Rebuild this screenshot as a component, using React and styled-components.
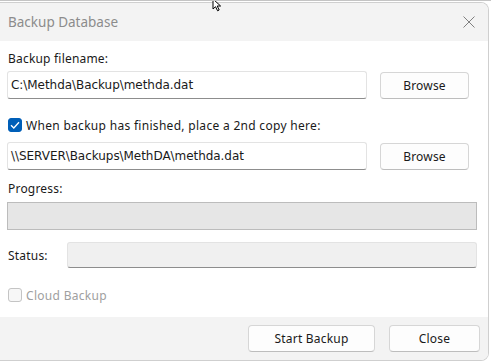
import React from "react";
import styled, { createGlobalStyle } from "styled-components";

const Global = createGlobalStyle`
  html, body {
    margin: 0;
    padding: 0;
    background: #ffffff;
    font-family: "Noto Sans", "Open Sans", sans-serif;
    font-size: 12px;
    letter-spacing: 0.2px;
    color: #1a1a1a;
  }
`;

const Screen = styled.div`
  position: relative;
  width: 491px;
  height: 364px;
  overflow: hidden;
  border-top: 1px solid #c4c4c4;
  box-sizing: border-box;
  padding-top: 1px;
`;

const Window = styled.div`
  width: 489px;
  height: 359px;
  box-sizing: border-box;
  border: 1px solid #cfcfcf;
  border-left: none;
  border-radius: 0 8px 8px 0;
  overflow: hidden;
  display: flex;
  flex-direction: column;
  background: #ffffff;
`;

const TitleBar = styled.div`
  height: 38px;
  flex: none;
  background: #f3f3f3;
  display: flex;
  align-items: center;
  justify-content: space-between;
  padding: 0 13px 0 8px;
  color: #8c8c8c;
  font-size: 13.5px;
  letter-spacing: 0;
`;

const Body = styled.div`
  flex: 1;
  padding: 10px 11px 0 7px;
  display: flex;
  flex-direction: column;
`;

const Label = styled.div`
  height: 16px;
  line-height: 16px;
  padding-left: 1px;
  margin-top: ${(p) => p.$mt || 0}px;
  color: ${(p) => (p.$disabled ? "#a0a0a0" : "#1a1a1a")};
`;

const Row = styled.div`
  display: flex;
  align-items: center;
  gap: ${(p) => p.$gap || 13}px;
  margin-top: ${(p) => p.$mt || 0}px;
  padding-right: ${(p) => p.$pr || 0}px;
`;

const TextBox = styled.div`
  flex: 1;
  height: ${(p) => p.$h || 28}px;
  box-sizing: border-box;
  border: 1px solid #e3e3e3;
  border-bottom: 1px solid #8d8d8d;
  border-radius: 3px;
  padding: 0 3px;
  display: flex;
  align-items: center;
  font-family: "DejaVu Sans", "Noto Sans", sans-serif;
  font-size: 12px;
  letter-spacing: -0.05px;
  background: ${(p) => (p.$disabled ? "#f0f0f0" : "#ffffff")};
`;

const Button = styled.button`
  flex: none;
  width: ${(p) => p.$w || 89}px;
  height: 27px;
  box-sizing: border-box;
  background: #fdfdfd;
  border: 1px solid #d6d6d6;
  border-bottom-color: #bdbdbd;
  border-radius: 4px;
  font-family: inherit;
  font-size: 12px;
  letter-spacing: 0.2px;
  color: #1a1a1a;
  padding: 0;
`;

const Check = styled.span`
  width: 14px;
  height: 14px;
  box-sizing: border-box;
  border-radius: 3px;
  display: inline-flex;
  align-items: center;
  justify-content: center;
  background: ${(p) => (p.$checked ? "#005fb8" : "#f7f7f7")};
  border: 1px solid ${(p) => (p.$checked ? "#005fb8" : "#c4c4c4")};
`;

const CheckRow = styled.label`
  display: flex;
  align-items: center;
  gap: 4px;
  height: 16px;
  margin-top: ${(p) => p.$mt || 0}px;
  padding-left: 1px;
  letter-spacing: 0.3px;
  color: ${(p) => (p.$disabled ? "#a0a0a0" : "#1a1a1a")};
`;

const Progress = styled.div`
  height: 28px;
  margin-top: 5px;
  box-sizing: border-box;
  background: #e6e6e6;
  border: 1px solid #bcbcbc;
`;

const StatusLabel = styled.div`
  width: 48px;
  padding-left: 1px;
`;

const Footer = styled.div`
  height: 43px;
  flex: none;
  background: #f3f3f3;
  display: flex;
  justify-content: flex-end;
  align-items: center;
  gap: 14px;
  padding: 0 8px 0 0;
`;

const Cursor = styled.svg`
  position: absolute;
  left: 212px;
  top: -3px;
`;

function Tick() {
  return (
    <svg width="10" height="8" viewBox="0 0 10 8">
      <path d="M1 4.2 L3.8 7 L9 1.2" fill="none" stroke="#fff" strokeWidth="1.3" />
    </svg>
  );
}

export default function App() {
  return (
    <>
      <Global />
      <Screen>
        <Window>
          <TitleBar>
            <span>Backup Database</span>
            <svg width="12" height="12" viewBox="0 0 12 12">
              <path d="M0.5 0.5 L11.5 11.5 M11.5 0.5 L0.5 11.5" stroke="#808080" strokeWidth="1" />
            </svg>
          </TitleBar>
          <Body>
            <Label>Backup filename:</Label>
            <Row $mt={4} $pr={8}>
              <TextBox>C:\Methda\Backup\methda.dat</TextBox>
              <Button>Browse</Button>
            </Row>
            <CheckRow $mt={18}>
              <Check $checked>
                <Tick />
              </Check>
              When backup has finished, place a 2nd copy here:
            </CheckRow>
            <Row $mt={9} $pr={8}>
              <TextBox>\\SERVER\Backups\MethDA\methda.dat</TextBox>
              <Button>Browse</Button>
            </Row>
            <Label $mt={11}>Progress:</Label>
            <Progress />
            <Row $mt={12} $gap={11}>
              <StatusLabel>Status:</StatusLabel>
              <TextBox $disabled $h={26} />
            </Row>
            <CheckRow $mt={19} $disabled>
              <Check />
              Cloud Backup
            </CheckRow>
          </Body>
          <Footer>
            <Button $w={127}>Start Backup</Button>
            <Button $w={91}>Close</Button>
          </Footer>
        </Window>
        <Cursor width="14" height="14" viewBox="0 0 14 14">
          <path d="M1 1 L1 11 L3.5 8.7 L5.6 12.8 L7.2 12 L5.2 8 L8.6 8 Z" fill="#fff" stroke="#000" strokeWidth="1" />
        </Cursor>
      </Screen>
    </>
  );
}
